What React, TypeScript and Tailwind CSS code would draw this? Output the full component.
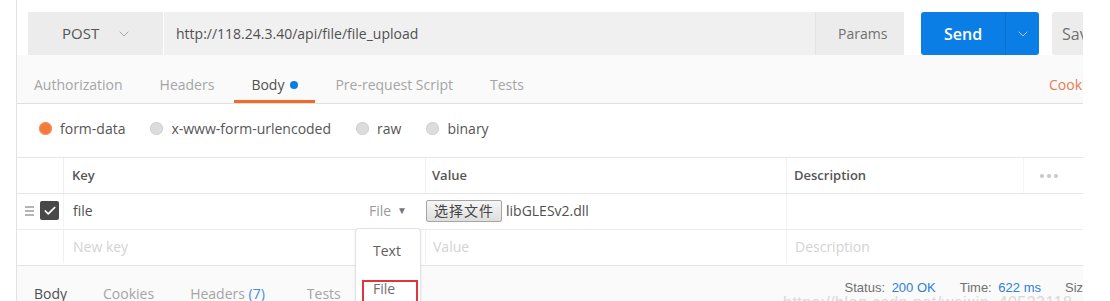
import { ChevronDown, Check } from "lucide-react";

const tabs = ["Authorization", "Headers", "Body", "Pre-request Script", "Tests"];

function Radio({ checked, label }: { checked?: boolean; label: string }) {
  return (
    <div className="flex items-center gap-[8px]">
      <span
        className={
          checked
            ? "h-[13px] w-[13px] rounded-full bg-[#f47a3c] shadow-[inset_0_0_0_1px_#f29a6c]"
            : "h-[13px] w-[13px] rounded-full bg-[#dcdcdc] shadow-[inset_0_0_0_1px_#d2d2d2]"
        }
      />
      <span className="text-[14px] text-[#555]">{label}</span>
    </div>
  );
}

export default function App() {
  return (
    <div className="flex h-[301px] w-[1110px] overflow-hidden bg-white font-['Open_Sans',sans-serif]">
      <div className="w-4 shrink-0" />

      <div className="relative flex w-[1067px] shrink-0 flex-col overflow-hidden border-l border-[#e2e2e2]">
        {/* URL bar */}
        <div className="flex h-[55px] shrink-0 bg-white pl-[11px] pt-3">
          <div className="flex h-[43px] w-[135px] items-center gap-[17px] bg-[#ececec] pl-[34px] text-[15px] text-[#555]">
            POST
            <ChevronDown size={16} strokeWidth={1.5} className="text-[#a8a8a8]" />
          </div>
          <div className="ml-px flex h-[43px] w-[651px] items-center bg-[#f0f0f0] pl-3 text-[14px] text-[#505050]">
            http://118.24.3.40/api/file/file_upload
          </div>
          <div className="flex h-[43px] w-[89px] items-center border-l border-[#e4e4e4] bg-[#ececec] pl-[22px] text-[14px] text-[#707070]">
            Params
          </div>
          <div className="ml-[17px] flex h-[43px] w-[118px] overflow-hidden rounded-[3px] bg-[#0b7ee6] text-white">
            <div className="flex w-[84px] items-center pl-[23px] text-[16px] font-semibold">Send</div>
            <div className="w-px bg-[#0a72d0]" />
            <div className="flex flex-1 items-center justify-center">
              <ChevronDown size={16} strokeWidth={1.5} className="text-[#a9d0f7]" />
            </div>
          </div>
          <div className="ml-[13px] flex h-[43px] flex-1 items-center overflow-hidden whitespace-nowrap rounded-l-[3px] bg-[#ececec] pl-[10px] text-[16px] text-[#707070]">
            Save
          </div>
        </div>

        {/* request tabs */}
        <div className="flex h-[49px] shrink-0 gap-[3px] border-b border-[#e0e0e0] bg-[#fafafa]">
          {tabs.map((t) => (
            <div
              key={t}
              className={
                t === "Body"
                  ? "flex h-full items-center gap-[6px] border-b-[3px] border-[#f06a2a] px-[17px] pt-[14px] text-[14px] text-[#505050]"
                  : "flex h-full items-center px-[17px] pt-[11px] text-[14px] text-[#a5a5a5]"
              }
            >
              {t}
              {t === "Body" && <span className="h-[8px] w-[8px] rounded-full bg-[#0b7ee6]" />}
            </div>
          ))}
          <div className="ml-auto flex h-full w-[34px] shrink-0 items-center overflow-hidden whitespace-nowrap pt-[11px] text-[14px] text-[#e77a4f]">
            Cookies
          </div>
        </div>

        {/* body type radios */}
        <div className="flex h-[53px] shrink-0 items-center gap-[25px] pb-[5px] pl-[22px]">
          <Radio checked label="form-data" />
          <Radio label="x-www-form-urlencoded" />
          <Radio label="raw" />
          <Radio label="binary" />
        </div>

        {/* table header */}
        <div className="flex h-[37px] shrink-0 border-y border-[#e6e6e6] text-[13px] font-semibold text-[#555]">
          <div className="w-[46px] shrink-0" />
          <div className="flex w-[362px] shrink-0 items-center border-l border-[#f0f0f0] pl-[8px]">Key</div>
          <div className="flex w-[361px] shrink-0 items-center border-l border-[#f0f0f0] pl-[6px]">Value</div>
          <div className="flex w-[237px] shrink-0 items-center border-l border-[#f0f0f0] pl-[7px]">Description</div>
          <div className="flex flex-1 items-center gap-[3px] border-l border-[#f5f5f5] pl-[16px]">
            <span className="h-[4px] w-[4px] rounded-full bg-[#c6c6c6]" />
            <span className="h-[4px] w-[4px] rounded-full bg-[#c6c6c6]" />
            <span className="h-[4px] w-[4px] rounded-full bg-[#c6c6c6]" />
          </div>
        </div>

        {/* row 1 */}
        <div className="flex h-[36px] shrink-0 border-b border-[#ececec] pb-[2px] text-[14px]">
          <div className="flex w-[46px] shrink-0 items-center gap-[6px] pl-[8px]">
            <div className="flex w-[9px] flex-col gap-[2px]">
              <span className="h-[2px] bg-[#b5b5b5]" />
              <span className="h-[2px] bg-[#b5b5b5]" />
              <span className="h-[2px] bg-[#b5b5b5]" />
            </div>
            <div className="flex h-[19px] w-[19px] items-center justify-center rounded-[2px] bg-[#484848]">
              <Check size={14} strokeWidth={3} className="text-white" />
            </div>
          </div>
          <div className="flex w-[362px] shrink-0 items-center justify-between border-l border-[#f3f3f3] pl-[9px] pr-[18px] text-[#505050]">
            <span>file</span>
            <span className="flex items-center gap-[6px] text-[#9a9a9a]">
              File
              <span className="text-[10px] text-[#777]">▼</span>
            </span>
          </div>
          <div className="flex w-[361px] shrink-0 items-center gap-[4px] pl-[1px] text-[#505050]">
            <span className="flex h-[22px] w-[76px] items-center justify-center rounded-[2px] border border-[#a5a5a5] bg-gradient-to-b from-[#f6f6f6] to-[#dedede] font-['Noto_Sans_CJK_SC',sans-serif] text-[14px] tracking-[1px] text-[#444]">
              选择文件
            </span>
            libGLESv2.dll
          </div>
          <div className="w-[237px] shrink-0 border-l border-[#f3f3f3]" />
          <div className="flex-1" />
        </div>

        {/* row 2 */}
        <div className="flex h-[36px] shrink-0 border-b border-[#e4e4e4] pb-[2px] text-[14px] text-[#d3d3d3]">
          <div className="w-[46px] shrink-0" />
          <div className="flex w-[362px] shrink-0 items-center border-l border-[#f0f0f0] pl-[9px]">New key</div>
          <div className="flex w-[361px] shrink-0 items-center border-l border-[#f0f0f0] pl-[7px]">Value</div>
          <div className="flex w-[237px] shrink-0 items-center border-l border-[#f0f0f0] pl-[8px]">Description</div>
          <div className="flex-1" />
        </div>

        {/* response bar */}
        <div className="flex flex-1 bg-[#fafafa] pl-[17px] pt-[17px]">
          <div className="flex gap-9 text-[14px] text-[#a5a5a5]">
            <span className="text-[#505050]">Body</span>
            <span>Cookies</span>
            <span>
              Headers <span className="text-[#3d8ee0]">(7)</span>
            </span>
            <span className="ml-[6px]">Tests</span>
          </div>
          <div className="ml-auto -mt-[5px] flex gap-[24px] whitespace-nowrap font-['Liberation_Sans',sans-serif] text-[13px] text-[#707070]">
            <span>
              Status: <span className="ml-[3px] text-[#2a80d8]">200 OK</span>
            </span>
            <span>
              Time: <span className="ml-[3px] text-[#2a80d8]">622 ms</span>
            </span>
            <span className="w-[18px] overflow-hidden">Size</span>
          </div>
        </div>

        {/* watermark */}
        <div className="pointer-events-none absolute left-[766px] top-[291px] whitespace-nowrap font-['Liberation_Sans',sans-serif] text-[16px] tracking-[0.5px] text-[#c9c9c9]/70">
          https://blog.csdn.net/weixin_40523118
        </div>

        {/* type dropdown */}
        <div className="absolute left-[338px] top-[228px] flex h-[80px] w-[66px] flex-col items-start rounded-t-[4px] border border-[#e2e2e2] bg-white pl-[6px] pt-[11px] shadow-[0_1px_3px_rgba(0,0,0,0.08)]">
          <span className="ml-[11px] text-[14px] text-[#606060]">Text</span>
          <div className="mt-[19px] h-[30px] w-[56px] border-2 border-[#e3343b] pl-[9px] text-[14px] leading-[13px] text-[#707070]">
            File
          </div>
        </div>
      </div>
    </div>
  );
}
